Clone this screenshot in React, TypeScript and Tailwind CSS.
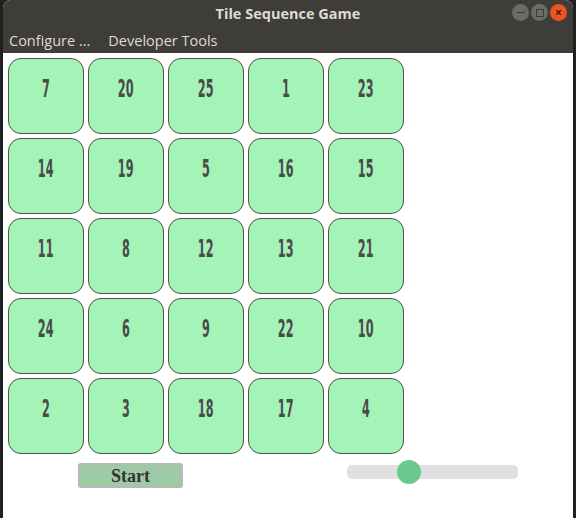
import { useState } from 'react';

const tiles = [
  [7, 20, 25, 1, 23],
  [14, 19, 5, 16, 15],
  [11, 8, 12, 13, 21],
  [24, 6, 9, 22, 10],
  [2, 3, 18, 17, 4],
];

const Tile = ({ value }: { value: number }) => (
  <div className="w-[76px] h-[76px] rounded-[13px] border-[1.5px] border-[#505050] bg-[#a4f4b8] flex justify-center pt-[17px]">
    <span
      className="text-[25px] font-bold leading-none text-[#4a4a4a] scale-x-[0.5] inline-block"
      style={{ fontFamily: '"DejaVu Sans Condensed", "DejaVu Sans", sans-serif' }}
    >
      {value}
    </span>
  </div>
);

const App = () => {
  const [speed, setSpeed] = useState(33);

  return (
    <div className="w-[576px] h-[518px] bg-[#202020] pl-[3px] pr-[3px] overflow-hidden">
      <div className="h-full flex flex-col bg-white rounded-t-[8px] overflow-hidden">
        {/* title bar */}
        <div className="h-[28px] shrink-0 bg-[#3f3d39] flex items-center relative">
          <div
            className="flex-1 text-center text-[14.5px] font-bold text-[#dfdbd2]"
            style={{ fontFamily: '"Open Sans", "DejaVu Sans", sans-serif' }}
          >
            Tile Sequence Game
          </div>
          <div className="absolute right-[6px] top-[4px] flex gap-[2px]">
            <div className="w-[17px] h-[17px] rounded-full bg-[#6d6b66] flex items-center justify-center">
              <div className="w-[8px] h-[1.5px] bg-[#3c3b37]" />
            </div>
            <div className="w-[17px] h-[17px] rounded-full bg-[#6d6b66] flex items-center justify-center">
              <div className="w-[8px] h-[8px] border border-[#3c3b37]" />
            </div>
            <div className="w-[17px] h-[17px] rounded-full bg-[#e9541f] flex items-center justify-center text-[12px] leading-none text-[#3c1a0c] font-bold">
              ×
            </div>
          </div>
        </div>
        {/* menu bar */}
        <div
          className="h-[25px] shrink-0 bg-[#3f3d39] flex items-center gap-[18px] pl-[6px] text-[14.5px] text-[#dfdbd2]"
          style={{ fontFamily: '"Open Sans", "DejaVu Sans", sans-serif' }}
        >
          <span>Configure ...</span>
          <span>Developer Tools</span>
        </div>
        {/* board */}
        <div className="flex-1 bg-white pt-[5px] pl-[5px]">
          <div className="grid grid-cols-[repeat(5,76px)] gap-[4px]">
            {tiles.flat().map((n) => (
              <Tile key={n} value={n} />
            ))}
          </div>
          <div className="flex items-start mt-[9px]">
            <button
              className="ml-[70px] w-[105px] h-[25px] bg-[#9ecaa6] border-2 border-[#b8b8b8] rounded-[3px] text-[18px] font-bold text-[#333] leading-none"
              style={{ fontFamily: '"Liberation Serif", serif' }}
            >
              Start
            </button>
            <div className="ml-[164px] mt-[2px] relative w-[171px] h-[14px] rounded-[5px] bg-[#e0e0e0]">
              <div
                className="absolute top-[-5px] w-[24px] h-[24px] rounded-full bg-[#6cc78d]"
                style={{ left: `${speed * 1.5}px` }}
                onClick={() => setSpeed(speed)}
              />
            </div>
          </div>
        </div>
      </div>
    </div>
  );
};

export default App;
